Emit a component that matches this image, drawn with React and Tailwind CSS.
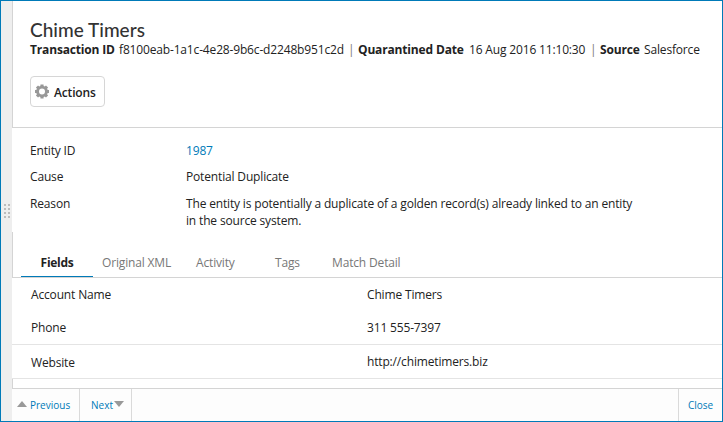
import React from "react";

const details = [
  { label: "Entity ID", value: "1987", link: true },
  { label: "Cause", value: "Potential Duplicate" },
];

const fields = [
  { label: "Account Name", value: "Chime Timers", row: "h-[33px] pt-[9px]", shift: "" },
  { label: "Phone", value: "311 555-7397", row: "h-[34px] pt-[9px] border-b border-[#e4e4e4]", shift: "" },
  { label: "Website", value: "http://chimetimers.biz", row: "h-[34px] pt-[9px] border-b border-[#e4e4e4]", shift: "pt-px" },
];

function Gear() {
  return (
    <svg width="14" height="15" viewBox="0 0 14 15" className="shrink-0">
      <g transform="translate(7 7.5)" fill="#989898">
        {[0, 45, 90, 135, 180, 225, 270, 315].map((a) => (
          <path key={a} d="M-1.8 -4 L-1.5 -7.1 H1.5 L1.8 -4 Z" transform={`rotate(${a})`} />
        ))}
        <circle r="4.4" fill="none" stroke="#989898" strokeWidth="2.8" />
      </g>
    </svg>
  );
}

function Grip() {
  return (
    <div className="mt-[203px] ml-[3px] grid w-[6px] grid-cols-2 gap-x-[2px] gap-y-[2px]">
      {Array.from({ length: 8 }, (_, i) => (
        <span key={i} className="h-[2px] w-[2px] bg-[#bcbcbc]" />
      ))}
    </div>
  );
}

export default function App() {
  return (
    <div className="flex h-[422px] w-[723px] overflow-hidden border border-[#007ab8] bg-white font-['Open_Sans',sans-serif] text-[12px] leading-[16px] tracking-[-0.16px] whitespace-nowrap text-[#222]">
      <aside className="w-[11px] shrink-0 bg-[#eeeeee]">
        <Grip />
      </aside>
      <main className="flex min-w-0 flex-1 flex-col">
        <header className="h-[127px] border-b border-l border-[#d4d4d4] pt-[17px] pl-[17px]">
          <h1 className="h-[24px] font-['Lato',sans-serif] text-[19px] leading-[24px] font-medium tracking-[0.02px] text-[#333]">Chime Timers</h1>
          <div className="flex h-[34px]">
            <b className="w-[89px]">Transaction ID</b>
            <span className="w-[229px]">f8100eab-1a1c-4e28-9b6c-d2248b951c2d</span>
            <span className="w-[10px] text-[#777]">|</span>
            <b className="w-[111px]">Quarantined Date</b>
            <span className="w-[121px]">16 Aug 2016 11:10:30</span>
            <span className="w-[10px] text-[#777]">|</span>
            <b className="w-[44px]">Source</b>
            <span>Salesforce</span>
          </div>
          <button className="flex h-[31px] w-[75px] items-center gap-[5px] rounded-[4px] border border-[#d6d6d6] bg-white pl-[4px] font-semibold">
            <Gear />
            <span className="pt-[2px]">Actions</span>
          </button>
        </header>
        <section className="h-[104px] pt-[15px] pl-[18px]">
          {details.map((d) => (
            <div key={d.label} className="flex h-[26px]">
              <span className="w-[156px]">{d.label}</span>
              <span className={d.link ? "text-[#007ab8]" : ""}>{d.value}</span>
            </div>
          ))}
          <div className="flex leading-[17px]">
            <span className="w-[156px]">Reason</span>
            <span>
              The entity is potentially a duplicate of a golden record(s) already linked to an entity
              <br />
              in the source system.
            </span>
          </div>
        </section>
        <nav className="flex h-[46px] border-b border-l border-[#d4d4d4] pl-[8px] text-[#777]">
          <div className="h-[45px] w-[72px] border-b border-[#007ab8] pt-[23px] text-center font-bold tracking-[-0.3px] text-[#222]">Fields</div>
          <span className="w-[94px] pt-[23px] pl-[9px]">Original XML</span>
          <span className="w-[79px] pt-[23px] pl-[9px]">Activity</span>
          <span className="w-[57px] pt-[23px] pl-[9px]">Tags</span>
          <span className="pt-[23px] pl-[9px]">Match Detail</span>
        </nav>
        <section className="h-[101px]">
          {fields.map((f) => (
            <div key={f.label} className={`flex pl-[19px] ${f.row}`}>
              <span className={`w-[336px] ${f.shift}`}>{f.label}</span>
              <span>{f.value}</span>
            </div>
          ))}
        </section>
        <div className="h-[10px] border-b border-l border-[#d4d4d4]" />
        <footer className="flex flex-1 bg-[#fdfdfd] text-[10px] tracking-normal text-[#007ab8]">
          <div className="flex w-[68px] border-r border-[#dadada] pt-[8px] pl-[5px]">
            <svg width="10" height="6" className="mt-[4px] mr-[3px] shrink-0">
              <path d="M5 0 L10 6 H0 Z" fill="#999" />
            </svg>
            Previous
          </div>
          <div className="flex w-[52px] border-r border-[#dadada] pt-[8px] pl-[11px]">
            <span className="w-[23px]">Next</span>
            <svg width="10" height="6" className="mt-[4px] shrink-0">
              <path d="M0 0 H10 L5 6 Z" fill="#999" />
            </svg>
          </div>
          <div className="flex-1" />
          <div className="w-[44px] border-l border-[#dadada] pt-[8px] pl-[9px]">Close</div>
        </footer>
      </main>
    </div>
  );
}
